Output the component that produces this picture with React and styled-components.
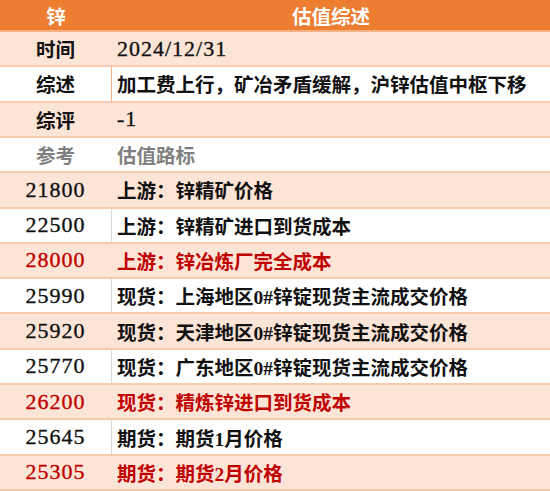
import styled, { createGlobalStyle } from 'styled-components';

const GlobalStyle = createGlobalStyle`
  html, body {
    margin: 0;
    padding: 0;
    background: #ffffff;
  }
  body {
    font-family: "Liberation Serif", "Noto Sans CJK SC", serif;
  }
`;

const Table = styled.div`
  display: grid;
  grid-template-rows: 32px repeat(13, 1fr);
  width: 550px;
  height: 491px;
  overflow: hidden;
`;

const Row = styled.div`
  display: grid;
  grid-template-columns: 112px 1fr;
  align-items: stretch;
  background: ${p => (p.$shade ? '#fce4d6' : '#ffffff')};
  border-bottom: 2px solid #f8cbad;
  box-sizing: border-box;
  color: ${p => p.$color || '#111111'};
  font-weight: 700;
  font-size: 19.5px;
`;

const HeadRow = styled(Row)`
  background: #ed7d31;
  color: #ffffff;
  border-bottom: 2px solid #f4b183;
`;

const Cell = styled.div`
  display: flex;
  align-items: center;
  justify-content: ${p => (p.$center ? 'center' : 'flex-start')};
  padding-left: ${p => (p.$center ? '0' : '5px')};
  white-space: nowrap;
  letter-spacing: ${p => (p.$num ? '1px' : '0')};
  font-size: ${p => (p.$num ? '22px' : '19.5px')};
  font-weight: ${p => (p.$num ? 400 : 700)};
  -webkit-text-stroke: ${p => (p.$num ? '0.35px' : '0')};
`;

const KeyCell = styled(Cell)`
  border-right: 1px solid ${p => p.$divider || 'transparent'};
`;

const RED = '#c00000';
const GRAY = '#808080';

const info = [
  { key: '时间', value: '2024/12/31', shade: true, num: true },
  { key: '综述', value: '加工费上行，矿冶矛盾缓解，沪锌估值中枢下移', divider: '#f4b183' },
  { key: '综评', value: '-1', shade: true, num: true },
  { key: '参考', value: '估值路标', color: GRAY },
];

const prices = [
  { price: '21800', label: '上游：锌精矿价格', shade: true },
  { price: '22500', label: '上游：锌精矿进口到货成本', divider: '#d9d9d9' },
  { price: '28000', label: '上游：锌冶炼厂完全成本', shade: true, color: RED },
  { price: '25990', label: '现货：上海地区0#锌锭现货主流成交价格', divider: '#d9d9d9' },
  { price: '25920', label: '现货：天津地区0#锌锭现货主流成交价格', shade: true },
  { price: '25770', label: '现货：广东地区0#锌锭现货主流成交价格', divider: '#d9d9d9' },
  { price: '26200', label: '现货：精炼锌进口到货成本', shade: true, color: RED },
  { price: '25645', label: '期货：期货1月价格', divider: '#d9d9d9' },
  { price: '25305', label: '期货：期货2月价格', shade: true, color: RED },
];

const App = () => {
  return (
    <>
      <GlobalStyle />
      <Table>
        <HeadRow>
          <Cell $center>锌</Cell>
          <Cell $center>估值综述</Cell>
        </HeadRow>
        {info.map(e => (
          <Row key={e.key} $shade={e.shade} $color={e.color}>
            <KeyCell $center $divider={e.divider}>
              {e.key}
            </KeyCell>
            <Cell $num={e.num}>{e.value}</Cell>
          </Row>
        ))}
        {prices.map((e, idx) => (
          <Row key={idx} $shade={e.shade} $color={e.color}>
            <KeyCell $center $num $divider={e.divider}>
              {e.price}
            </KeyCell>
            <Cell>{e.label}</Cell>
          </Row>
        ))}
      </Table>
    </>
  );
};

export default App;
